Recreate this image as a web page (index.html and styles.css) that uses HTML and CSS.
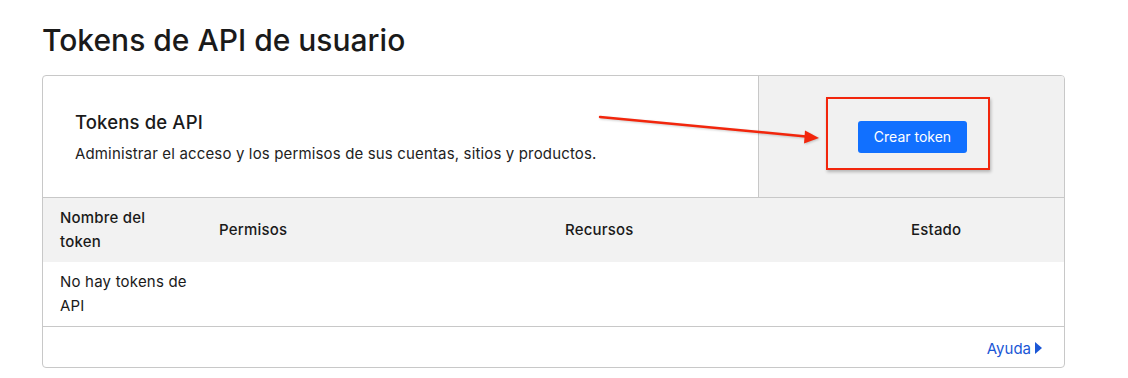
FILE: index.html
```html
<!DOCTYPE html>
<html lang="es">
<head>
    <meta charset="UTF-8">
    <meta name="viewport" content="width=device-width, initial-scale=1.0">
    <title>Tokens de API de usuario</title>
    <link rel="stylesheet" href="styles.css">
</head>
<body>

<div class="page">
    <h1>Tokens de API de usuario</h1>

    <div class="card">
        <div class="card-top">
            <div class="intro">
                <h2>Tokens de API</h2>
                <p>Administrar el acceso y los permisos de sus cuentas, sitios y productos.</p>
            </div>
            <div class="actions">
                <button class="button">Crear token</button>
            </div>
        </div>

        <div class="table">
            <div class="row head">
                <div class="cell">Nombre del token</div>
                <div class="cell">Permisos</div>
                <div class="cell">Recursos</div>
                <div class="cell">Estado</div>
            </div>
            <div class="row">
                <div class="cell">No hay tokens de API</div>
                <div class="cell"></div>
                <div class="cell"></div>
                <div class="cell"></div>
            </div>
        </div>

        <div class="card-foot">
            <a href="#" class="help">Ayuda <span class="tri"></span></a>
        </div>
    </div>

    <!-- anotación: flecha y recuadro rojo -->
    <div class="highlight"></div>
    <svg class="arrow" width="1128" height="378" viewBox="0 0 1128 378">
        <line x1="600" y1="117" x2="806" y2="136.5" stroke="#f2260c" stroke-width="2.5" stroke-linecap="round"/>
        <polygon points="819,138 805,130.5 804,143.5" fill="#f2260c"/>
    </svg>
</div>

</body>
</html>
```

FILE: styles.css
```css
body {
    margin: 0;
    font-family: Inter, "Open Sans", sans-serif;
    color: #1a1a1a;
    background: #fff;
}
.page {
    position: relative;
    padding: 22px 63px 0 42px;
}
h1 {
    margin: 0 0 17px;
    font-size: 30px;
    font-weight: 500;
    line-height: 36px;
    letter-spacing: 0;
}
.card {
    border: 1px solid #c8c8c8;
    border-radius: 4px;
    overflow: hidden;
}
.card-top {
    display: flex;
    height: 121px;
    border-bottom: 1px solid #c8c8c8;
}
.intro {
    width: 683px;
    padding: 34px 0 0 32px;
    border-right: 1px solid #c8c8c8;
}
.intro h2 {
    margin: 0 0 10px;
    font-size: 18.5px;
    font-weight: 500;
    line-height: 24px;
    letter-spacing: 0.15px;
}
.intro p {
    margin: 0;
    font-size: 15px;
    line-height: 20px;
    letter-spacing: 0.15px;
    color: #222;
}
.actions {
    flex: 1;
    background: #f1f1f1;
    display: flex;
    align-items: center;
    justify-content: center;
    padding-left: 2px;
}
.button {
    background: #1170ff;
    color: #fff;
    font-family: inherit;
    font-size: 14px;
    height: 32px;
    padding: 0 16px;
    border: none;
    border-radius: 3px;
    cursor: pointer;
}
.row {
    display: grid;
    grid-template-columns: 159px 346px 346px 1fr;
    height: 64px;
}
.row.head {
    background: #f2f2f2;
    font-weight: 500;
}
.row + .row {
    border-bottom: 1px solid #c8c8c8;
}
.cell {
    padding: 0 17px;
    display: flex;
    align-items: center;
    font-size: 15px;
    line-height: 24px;
    letter-spacing: 0.2px;
}
.row .cell:first-child {
    padding-right: 14px;
}
.card-foot {
    height: 38px;
    display: flex;
    align-items: center;
    justify-content: flex-end;
    padding: 2px 22px 0 0;
}
.help {
    color: #1b57d6;
    text-decoration: none;
    font-size: 15px;
    display: flex;
    align-items: center;
    gap: 4px;
}
.tri {
    width: 0;
    height: 0;
    border-top: 6px solid transparent;
    border-bottom: 6px solid transparent;
    border-left: 7px solid #1b57d6;
}
.highlight {
    position: absolute;
    left: 826px;
    top: 97px;
    width: 160px;
    height: 69px;
    border: 2px solid #f2260c;
    box-shadow: 1px 2px 3px rgba(0, 0, 0, 0.25);
}
.arrow {
    position: absolute;
    left: 0;
    top: 0;
    pointer-events: none;
    filter: drop-shadow(1px 1px 1px rgba(0, 0, 0, 0.2));
}
```
